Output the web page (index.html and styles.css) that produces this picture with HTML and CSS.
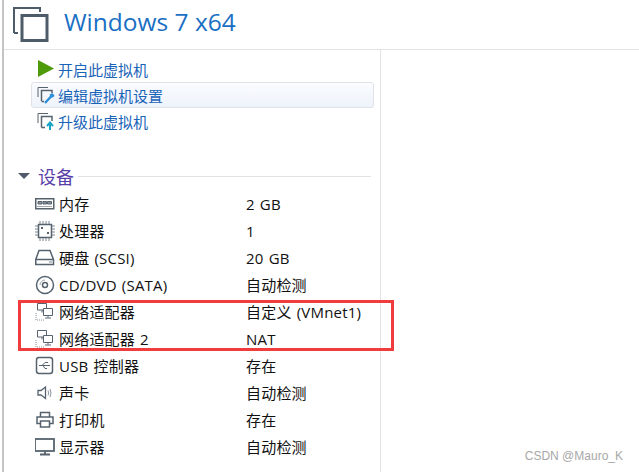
FILE: index.html
```html
<!doctype html>
<html>
<head>
    <meta charset="utf-8">
    <title>Windows 7 x64</title>
    <link rel="stylesheet" href="styles.css">
</head>
<body>
    <div class="window">
        <header class="title-bar">
            <svg class="vm-logo" width="36" height="35" viewBox="0 0 36 35" fill="none" stroke="#4d5c68">
                <path d="M1 26V1H27V5" stroke-width="2"/>
                <path d="M1 26H5" stroke-width="2"/>
                <rect x="9" y="8.500" width="25" height="25" stroke-width="3"/>
            </svg>
            <h1>Windows 7 x64</h1>
        </header>

        <div class="content">
            <section class="left-panel">
                <ul class="actions">
                    <li class="action">
                        <svg width="18" height="18" viewBox="0 0 18 18"><path d="M1 0L17 8.500L1 17Z" fill="#4e9a0a"/></svg>
                        <span>开启此虚拟机</span>
                    </li>
                    <li class="action selected">
                        <svg width="18" height="18" viewBox="0 0 18 18" fill="none">
                            <path d="M1 11V1.500H11" stroke="#56636e"/>
                            <path d="M4.500 15V4.500H15V7M4.500 15.500H7" stroke="#56636e" stroke-width="1.500"/>
                            <path d="M8 17L14 10.500M13 9.500L16 8M14 11L17 9" stroke="#2f8fd8" stroke-width="2.500"/>
                        </svg>
                        <span>编辑虚拟机设置</span>
                    </li>
                    <li class="action">
                        <svg width="18" height="18" viewBox="0 0 18 18" fill="none">
                            <path d="M1 11V1.500H11" stroke="#56636e"/>
                            <path d="M4.500 15.500V4.500H15V9M4.500 15.500H8" stroke="#56636e" stroke-width="1.500"/>
                            <path d="M13 18V11M10 14L13 10.500L16 14" stroke="#18a5c4" stroke-width="2"/>
                        </svg>
                        <span>升级此虚拟机</span>
                    </li>
                </ul>

                <div class="group-title">
                    <span class="arrow"></span>
                    <h2>设备</h2>
                    <hr>
                </div>

                <ul class="devices">
                    <li class="device">
                        <svg width="20" height="18" viewBox="0 0 20 18" fill="none" stroke="#56636e">
                            <rect x="0.750" y="3.750" width="18" height="10" stroke-width="1.500"/>
                            <path d="M3 6.500H7V9H3ZM8 6.500H11.500V9H8ZM12.500 6.500H16.500V9H12.500Z" fill="#8a949c"/>
                            <path d="M2 11.500H17" stroke="#a0a8ae"/>
                        </svg>
                        <span class="name">内存</span><span class="value">2 GB</span>
                    </li>
                    <li class="device">
                        <svg width="20" height="20" viewBox="0 0 20 20" fill="none" stroke="#56636e">
                            <rect x="3.500" y="3.500" width="13" height="13" stroke-width="1.500"/>
                            <path d="M5 0V3M8 0V3M11 0V3M14 0V3M5 17V20M8 17V20M11 17V20M14 17V20M0 5H3M0 8H3M0 11H3M0 14H3M17 5H20M17 8H20M17 11H20M17 14H20" stroke="#7a858e"/>
                            <path d="M6 6H8V8H6ZM12 11H14V13H12Z" fill="#56636e" stroke="none"/>
                        </svg>
                        <span class="name">处理器</span><span class="value">1</span>
                    </li>
                    <li class="device">
                        <svg width="20" height="18" viewBox="0 0 20 18" fill="none" stroke="#56636e">
                            <path d="M4 1.500H15L18.500 10.500V15.500H0.750V10.500ZM0.750 10.500H18.500" stroke-width="1.500"/>
                            <path d="M14 13H17" stroke="#7a858e"/>
                        </svg>
                        <span class="name">硬盘 (SCSI)</span><span class="value">20 GB</span>
                    </li>
                    <li class="device">
                        <svg width="20" height="20" viewBox="0 0 20 20" fill="none" stroke="#56636e">
                            <circle cx="10" cy="10" r="8.500" stroke-width="1.500"/>
                            <circle cx="10" cy="10" r="2.500" stroke-width="1.500"/>
                            <path d="M5 10A5 5 0 0 1 10 5" stroke="#a0a8ae"/>
                        </svg>
                        <span class="name">CD/DVD (SATA)</span><span class="value">自动检测</span>
                    </li>
                    <li class="device">
                        <svg width="20" height="18" viewBox="0 0 20 18" fill="none">
                            <path d="M2.500 0.500H11.500V7H2.500ZM7 7V9.500" stroke="#56636e"/>
                            <path d="M8.500 5.500H17.500V12.500H8.500ZM13 12.500V14.500M10 15H16" fill="#fff" stroke="#56636e"/>
                            <path d="M1 10V17H9" stroke="#8a949c" stroke-dasharray="1 1"/>
                        </svg>
                        <span class="name">网络适配器</span><span class="value">自定义 (VMnet1)</span>
                    </li>
                    <li class="device">
                        <svg width="20" height="18" viewBox="0 0 20 18" fill="none">
                            <path d="M2.500 0.500H11.500V7H2.500ZM7 7V9.500" stroke="#56636e"/>
                            <path d="M8.500 5.500H17.500V12.500H8.500ZM13 12.500V14.500M10 15H16" fill="#fff" stroke="#56636e"/>
                            <path d="M1 10V17H9" stroke="#8a949c" stroke-dasharray="1 1"/>
                        </svg>
                        <span class="name">网络适配器 2</span><span class="value">NAT</span>
                    </li>
                    <li class="device">
                        <svg width="20" height="20" viewBox="0 0 20 20" fill="none" stroke="#56636e">
                            <rect x="1.500" y="1.500" width="16" height="16" rx="2.500" stroke-width="1.500"/>
                            <path d="M4 9.500H15M7 9.500L10 6.500H13M8 9.500L10 12.500H12"/>
                        </svg>
                        <span class="name">USB 控制器</span><span class="value">存在</span>
                    </li>
                    <li class="device">
                        <svg width="20" height="18" viewBox="0 0 20 18" fill="none" stroke="#56636e">
                            <path d="M3 6.500H6L10.500 3V14.500L6 11H3Z" stroke-width="1.300"/>
                            <path d="M13 6.500Q14.500 9 13 11.500M15 5Q17 9 15 13" stroke="#8a949c"/>
                        </svg>
                        <span class="name">声卡</span><span class="value">自动检测</span>
                    </li>
                    <li class="device">
                        <svg width="20" height="18" viewBox="0 0 20 18" fill="none" stroke="#56636e" stroke-width="1.500">
                            <path d="M5.500 6V1.500H14.500V6M5.500 12.500H2V6H18V12.500H14.500"/>
                            <path d="M5.500 10H14.500V16H5.500Z"/>
                        </svg>
                        <span class="name">打印机</span><span class="value">存在</span>
                    </li>
                    <li class="device">
                        <svg width="20" height="18" viewBox="0 0 20 18" fill="none" stroke="#56636e">
                            <rect x="0" y="1" width="19" height="12" stroke-width="1.800"/>
                            <path d="M10 13V16M5 16.500H15" stroke-width="1.800"/>
                        </svg>
                        <span class="name">显示器</span><span class="value">自动检测</span>
                    </li>
                </ul>
            </section>
            <section class="right-panel"></section>
        </div>

        <div class="highlight"></div>
        <div class="watermark">CSDN @Mauro_K</div>
    </div>
</body>
</html>
```

FILE: styles.css
```css
html, body {
    margin: 0;
    background: #fff;
}

body {
    font-family: "Open Sans", "Noto Sans CJK SC", sans-serif;
    font-size: 15px;
    color: #111;
}

ul {
    list-style: none;
    margin: 0;
    padding: 0;
}

.window {
    position: relative;
    width: 635px;
    height: 472px;
    overflow: hidden;
    border-left: 2px solid #c4c4c4;
    margin-left: 2px;
}

.title-bar {
    display: flex;
    align-items: flex-start;
    height: 50px;
    padding: 7px 0 0 9px;
    border-bottom: 1px solid #e2e2e2;
    box-sizing: border-box;
}

.title-bar h1 {
    margin: 0 0 0 15px;
    font-family: "Open Sans", sans-serif;
    font-size: 24.500px;
    font-weight: 400;
    line-height: 30px;
    color: #1a6fc4;
}

.vm-logo {
    flex: none;
}

.content {
    display: flex;
    height: 422px;
}

.left-panel {
    width: 377px;
    box-sizing: border-box;
    border-right: 1px solid #e2e2e2;
    padding-top: 6px;
}

.actions {
    padding-left: 27px;
    padding-right: 6px;
}

.action {
    display: flex;
    align-items: center;
    gap: 3px;
    height: 26px;
    padding-left: 6px;
    color: #1a64b8;
}

.action svg {
    flex: none;
}

.action.selected {
    box-sizing: border-box;
    background: linear-gradient(#fafcff, #eef3fb);
    border: 1px solid #dfe3e9;
    border-radius: 3px;
    padding-left: 5px;
}

.group-title {
    display: flex;
    align-items: center;
    margin-top: 29px;
    padding-left: 14px;
    height: 26px;
}

.arrow {
    width: 0;
    height: 0;
    border-left: 6px solid transparent;
    border-right: 6px solid transparent;
    border-top: 6px solid #4d5c68;
    margin-right: 8px;
}

.group-title h2 {
    margin: 0;
    font-size: 18px;
    font-weight: 400;
    color: #5a3fa8;
}

.group-title hr {
    flex: 1;
    height: 0;
    margin: 0 9px 0 4px;
    border: 0;
    border-top: 1px solid #e2e2e2;
}

.devices {
    margin-top: 1px;
    padding-left: 31px;
}

.device {
    display: flex;
    align-items: center;
    height: 27px;
    letter-spacing: 0.2px;
    word-spacing: 1px;
}

.device svg {
    flex: none;
    width: 20px;
    margin-right: 4px;
}

.name {
    width: 187px;
    flex: none;
}

.highlight {
    position: absolute;
    left: 14px;
    top: 300px;
    width: 370px;
    height: 45px;
    border: 3px solid #f03c3c;
}

.watermark {
    position: absolute;
    right: 16px;
    bottom: 9px;
    font-family: "Liberation Sans", sans-serif;
    font-size: 12px;
    color: #a8a8a8;
}
```
